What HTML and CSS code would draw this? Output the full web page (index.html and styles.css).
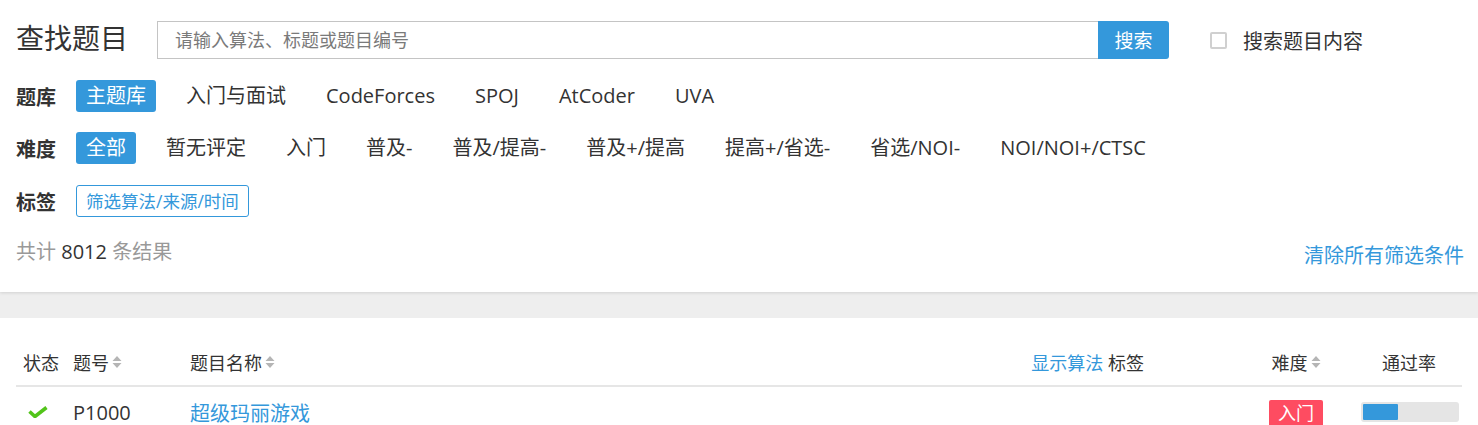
FILE: index.html
```html
<!DOCTYPE html>
<html lang="zh-CN">
<head>
<meta charset="utf-8">
<title>查找题目</title>
<link rel="stylesheet" href="styles.css">
</head>
<body>
<section class="card top">
  <div class="search-row">
    <h1 class="title">查找题目</h1>
    <div class="search-box">
      <input class="search-input" type="text" placeholder="请输入算法、标题或题目编号">
      <button class="search-btn">搜索</button>
    </div>
    <label class="check">
      <span class="check-box"></span>
      <span class="check-label">搜索题目内容</span>
    </label>
  </div>

  <div class="filter-row first">
    <span class="filter-label">题库</span>
    <div class="items">
      <span class="item active">主题库</span>
      <span class="item">入门与面试</span>
      <span class="item">CodeForces</span>
      <span class="item">SPOJ</span>
      <span class="item">AtCoder</span>
      <span class="item">UVA</span>
    </div>
  </div>

  <div class="filter-row">
    <span class="filter-label">难度</span>
    <div class="items">
      <span class="item active">全部</span>
      <span class="item">暂无评定</span>
      <span class="item">入门</span>
      <span class="item">普及-</span>
      <span class="item">普及/提高-</span>
      <span class="item">普及+/提高</span>
      <span class="item">提高+/省选-</span>
      <span class="item">省选/NOI-</span>
      <span class="item">NOI/NOI+/CTSC</span>
    </div>
  </div>

  <div class="filter-row third">
    <span class="filter-label">标签</span>
    <div class="items">
      <span class="outline-tag">筛选算法/来源/时间</span>
    </div>
  </div>

  <div class="count-row">
    <span class="count">共计 <b class="num">8012</b> 条结果</span>
    <a class="clear">清除所有筛选条件</a>
  </div>
</section>

<section class="card list">
  <div class="row head">
    <div class="col-status">状态</div>
    <div class="col-pid">题号<svg class="sort" viewBox="0 0 10 14" width="10" height="14"><path d="M0.5 6 L5 1 L9.5 6 Z M0.5 8 L5 13 L9.5 8 Z" fill="#b5b5b5"/></svg></div>
    <div class="col-title">题目名称<svg class="sort" viewBox="0 0 10 14" width="10" height="14"><path d="M0.5 6 L5 1 L9.5 6 Z M0.5 8 L5 13 L9.5 8 Z" fill="#b5b5b5"/></svg></div>
    <div class="col-tags"><a class="link">显示算法</a> 标签</div>
    <div class="col-diff">难度<svg class="sort" viewBox="0 0 10 14" width="10" height="14"><path d="M0.5 6 L5 1 L9.5 6 Z M0.5 8 L5 13 L9.5 8 Z" fill="#b5b5b5"/></svg></div>
    <div class="col-rate">通过率</div>
  </div>
  <div class="row item-row">
    <div class="col-status"><svg class="ok" viewBox="0 0 20 12" width="20" height="12"><path d="M1.5 5.5 L7 10.5 L18.5 1.5" fill="none" stroke="#52c41a" stroke-width="3.6"/></svg></div>
    <div class="col-pid pid">P1000</div>
    <div class="col-title"><a class="link ptitle">超级玛丽游戏</a></div>
    <div class="col-tags"></div>
    <div class="col-diff"><span class="badge">入门</span></div>
    <div class="col-rate"><div class="bar"><div class="bar-fill" style="width:37%"></div></div></div>
  </div>
</section>
</body>
</html>
```

FILE: styles.css
```css
* { box-sizing: border-box; }
html, body { margin: 0; padding: 0; }
body {
  background: #eeeeee;
  font-family: "Open Sans", "Noto Sans CJK SC", sans-serif;
  color: #333;
  overflow: hidden;
}
.card { background: #fff; }
.top {
  height: 292px;
  padding: 21px 14px 0 16px;
  box-shadow: 0 1px 3px rgba(0,0,0,0.12);
  position: relative;
}
.search-row {
  display: flex;
  align-items: center;
  height: 38px;
}
.title {
  margin: 0;
  flex: 0 0 141px;
  font-size: 28px;
  font-weight: normal;
  line-height: 38px;
  margin-top: -4px;
  color: #333;
}
.search-box {
  display: flex;
  height: 38px;
}
.search-input {
  width: 941px;
  height: 38px;
  border: 1px solid #c4c4c4;
  border-right: none;
  padding: 0 17px;
  font-size: 18px;
  font-family: "Open Sans", "Noto Sans CJK SC", sans-serif;
  outline: none;
  color: #333;
}
.search-input::placeholder { color: #7a7a7a; }
.search-btn {
  width: 71px;
  height: 38px;
  border: none;
  border-radius: 0 3px 3px 0;
  background: #3498db;
  color: #fff;
  font-size: 19px;
  font-family: "Open Sans", "Noto Sans CJK SC", sans-serif;
  padding: 0;
}
.check {
  display: flex;
  align-items: center;
  margin-left: 41px;
}
.check-box {
  width: 17px;
  height: 17px;
  border: 2px solid #d0d0d0;
  border-radius: 2px;
  margin-top: 1px;
}
.check-label {
  margin-left: 16px;
  font-size: 20px;
  color: #333;
}
.filter-row {
  display: flex;
  align-items: center;
  height: 32px;
  margin-top: 20px;
}
.filter-row.first { margin-top: 21px; }
.filter-row.third { margin-top: 21px; }
.filter-label {
  flex: 0 0 60px;
  font-size: 20px;
  font-weight: bold;
  color: #333;
}
.items {
  display: flex;
  gap: 20px;
  align-items: center;
}
.item {
  height: 32px;
  line-height: 32px;
  padding: 0 10px;
  font-size: 20px;
  color: #333;
  border-radius: 3px;
  white-space: nowrap;
}
.item.active {
  background: #3498db;
  color: #fff;
}
.outline-tag {
  height: 32px;
  line-height: 30px;
  padding: 0 9px;
  border: 1px solid #3498db;
  border-radius: 3px;
  color: #3498db;
  font-size: 17.5px;
  white-space: nowrap;
}
.count-row {
  display: flex;
  justify-content: space-between;
  align-items: flex-start;
  margin-top: 20px;
}
.count {
  font-size: 20px;
  color: #999;
  line-height: 30px;
}
.num { font-weight: normal; color: #333; }
.clear {
  font-size: 20px;
  color: #3498db;
  line-height: 30px;
  margin-top: 4px;
}
.list {
  margin-top: 26px;
  padding: 0 16px 0 16px;
  height: 200px;
}
.row {
  display: flex;
  align-items: center;
}
.head {
  height: 69px;
  padding-top: 20px;
  border-bottom: 2px solid #e6e6e6;
  font-size: 18px;
  color: #333;
}
.item-row {
  height: 50px;
  font-size: 20px;
}
.col-status {
  flex: 0 0 50px;
  text-align: center;
  display: flex;
  justify-content: center;
  align-items: center;
}
.col-pid {
  flex: 0 0 117px;
  margin-left: 7px;
  display: flex;
  align-items: center;
}
.col-title {
  flex: 1 1 auto;
  display: flex;
  align-items: center;
}
.col-tags {
  flex: 0 0 250px;
  text-align: right;
  margin-right: 92px;
}
.col-diff {
  flex: 0 0 120px;
  display: flex;
  justify-content: center;
  align-items: center;
}
.col-rate {
  flex: 0 0 106px;
  display: flex;
  justify-content: center;
  align-items: center;
}
.sort { margin-left: 3px; }
.link { color: #3498db; }
.pid { color: #333; }
.ptitle { font-size: 20px; }
.ok { margin-left: -6px; }
.badge {
  display: inline-block;
  width: 54px;
  height: 27px;
  line-height: 27px;
  text-align: center;
  background: #fe4c61;
  color: #fff;
  border-radius: 2px;
  font-size: 18px;
  margin-top: 2px;
}
.bar {
  width: 98px;
  height: 20px;
  background: #e5e5e5;
  border-radius: 3px;
  padding: 2px;
  margin-left: 2px;
}
.bar-fill {
  height: 100%;
  background: #3498db;
  border-radius: 1px;
}
```
